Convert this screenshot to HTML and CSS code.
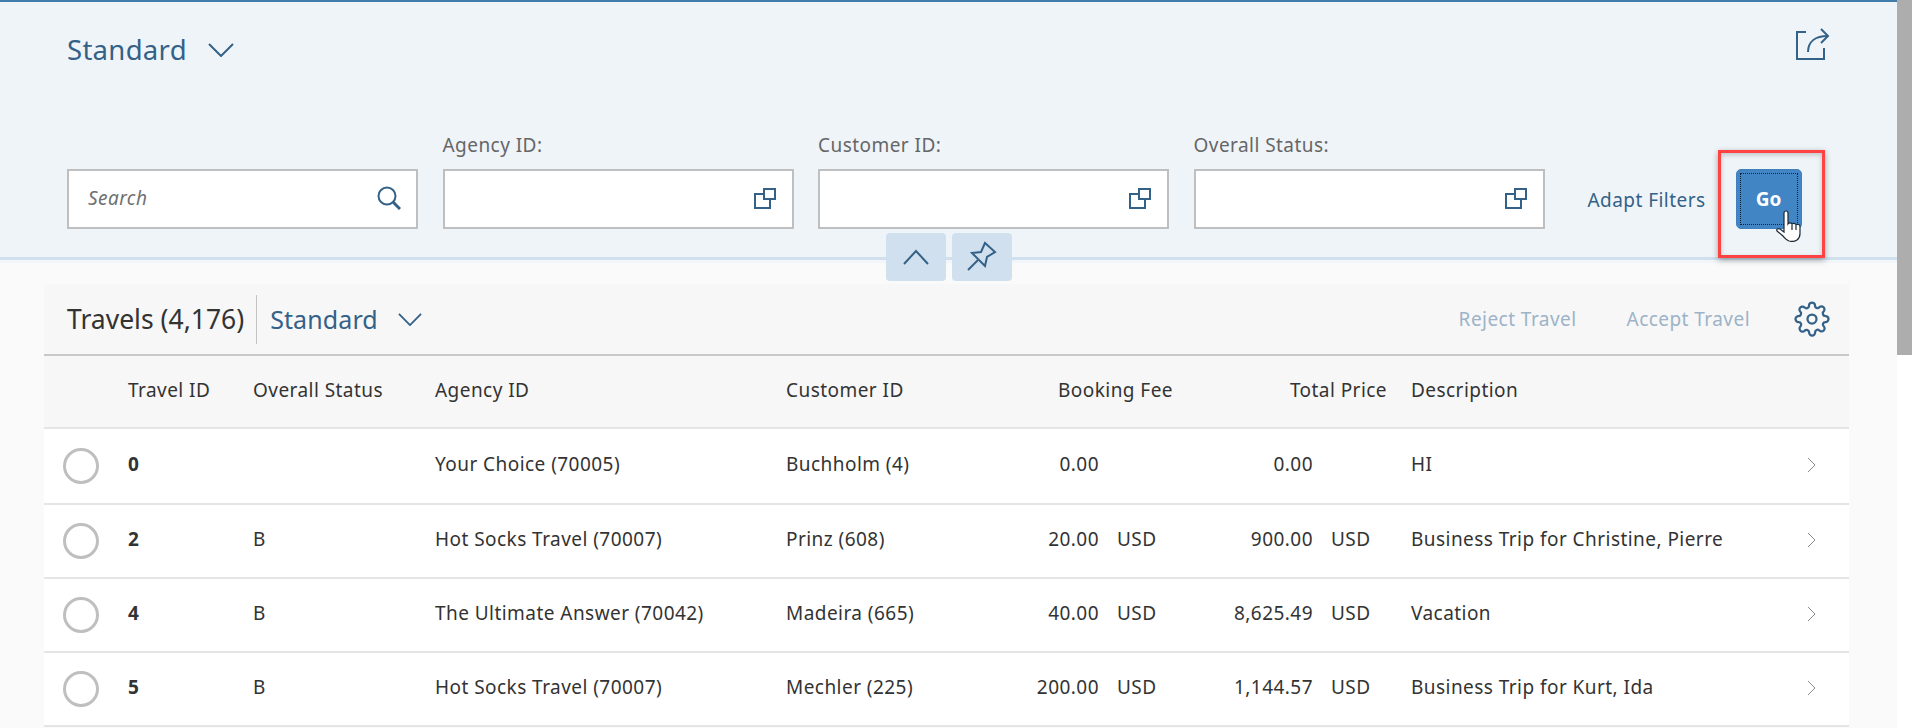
FILE: index.html
```html
<!DOCTYPE html>
<html lang="en">
<head>
    <meta charset="UTF-8">
    <title>Travels</title>
    <link rel="stylesheet" href="styles.css">
</head>
<body>
    <div class="page">
        <div class="filter-bar">
            <div class="title-row">
                <div class="variant">
                    <span class="variant-name">Standard</span>
                    <svg class="chevron-big" viewBox="0 0 26 14"><path d="M1 1l12 12L25 1"/></svg>
                </div>
                <svg class="share-icon" viewBox="0 0 36 34"><path d="M11 4H2v27h27V20"/><path d="M13 24C13 14 20 8 33 8"/><path d="M26 1l7 7-7 7"/></svg>
            </div>
            <div class="filter-row">
                <div class="field">
                    <div class="input">
                        <span class="placeholder">Search</span>
                        <svg class="input-icon" viewBox="0 0 24 24"><circle cx="10" cy="10" r="8.5"/><path d="M16 16l7 7" class="thick"/></svg>
                    </div>
                </div>
                <div class="field">
                    <label>Agency ID:</label>
                    <div class="input">
                        <svg class="input-icon" viewBox="0 0 24 24"><path d="M11 8H2v14h15v-9"/><rect x="11" y="3" width="11" height="10"/></svg>
                    </div>
                </div>
                <div class="field">
                    <label>Customer ID:</label>
                    <div class="input">
                        <svg class="input-icon" viewBox="0 0 24 24"><path d="M11 8H2v14h15v-9"/><rect x="11" y="3" width="11" height="10"/></svg>
                    </div>
                </div>
                <div class="field">
                    <label>Overall Status:</label>
                    <div class="input">
                        <svg class="input-icon" viewBox="0 0 24 24"><path d="M11 8H2v14h15v-9"/><rect x="11" y="3" width="11" height="10"/></svg>
                    </div>
                </div>
                <a class="adapt-link">Adapt Filters</a>
                <button class="go-btn" type="button"><span class="go-focus">Go</span></button>
            </div>
        </div>

        <div class="collapse-btns">
            <div class="collapse-btn">
                <svg class="collapse-arrow" viewBox="0 0 26 16"><path d="M1 15L13 2l12 13"/></svg>
            </div>
            <div class="collapse-btn">
                <svg class="pin-icon" viewBox="0 0 34 34"><path d="M3 30l10-10"/><path d="M7 13l9-1 4-9 10 9-8 5-2 9z"/></svg>
            </div>
        </div>

        <div class="table-wrap">
            <div class="toolbar">
                <span class="table-title">Travels (4,176)</span>
                <span class="toolbar-sep"></span>
                <span class="toolbar-variant">Standard</span>
                <svg class="chevron-mid" viewBox="0 0 26 14"><path d="M1 1l12 12L25 1"/></svg>
                <span class="toolbar-space"></span>
                <span class="action-off">Reject Travel</span>
                <span class="action-off">Accept Travel</span>
                <svg class="gear-icon" viewBox="0 0 24 24"><circle cx="12" cy="12" r="3"/><path d="M19.4 15a1.65 1.65 0 0 0 .33 1.82l.06.06a2 2 0 0 1 0 2.83 2 2 0 0 1-2.83 0l-.06-.06a1.65 1.65 0 0 0-1.82-.33 1.65 1.65 0 0 0-1 1.51V21a2 2 0 0 1-2 2 2 2 0 0 1-2-2v-.09A1.65 1.65 0 0 0 9 19.4a1.65 1.65 0 0 0-1.82.33l-.06.06a2 2 0 0 1-2.83 0 2 2 0 0 1 0-2.83l.06-.06a1.65 1.65 0 0 0 .33-1.82 1.65 1.65 0 0 0-1.51-1H3a2 2 0 0 1-2-2 2 2 0 0 1 2-2h.09A1.65 1.65 0 0 0 4.6 9a1.65 1.65 0 0 0-.33-1.82l-.06-.06a2 2 0 0 1 0-2.83 2 2 0 0 1 2.83 0l.06.06a1.65 1.65 0 0 0 1.82.33H9a1.65 1.65 0 0 0 1-1.51V3a2 2 0 0 1 2-2 2 2 0 0 1 2 2v.09a1.65 1.65 0 0 0 1 1.51 1.65 1.65 0 0 0 1.82-.33l.06-.06a2 2 0 0 1 2.83 0 2 2 0 0 1 0 2.83l-.06.06a1.65 1.65 0 0 0-.33 1.82V9a1.65 1.65 0 0 0 1.51 1H21a2 2 0 0 1 2 2 2 2 0 0 1-2 2h-.09a1.65 1.65 0 0 0-1.51 1z"/></svg>
            </div>
            <table class="travel-table">
                <colgroup>
                    <col class="c-select"><col class="c-id"><col class="c-status"><col class="c-agency">
                    <col class="c-customer"><col class="c-fee"><col class="c-price"><col class="c-desc"><col class="c-nav">
                </colgroup>
                <thead>
                    <tr>
                        <th></th>
                        <th>Travel ID</th>
                        <th>Overall Status</th>
                        <th>Agency ID</th>
                        <th>Customer ID</th>
                        <th class="num">Booking Fee</th>
                        <th class="num">Total Price</th>
                        <th>Description</th>
                        <th></th>
                    </tr>
                </thead>
                <tbody>
                    <tr class="first">
                        <td><span class="radio"></span></td>
                        <td class="strong">0</td>
                        <td></td>
                        <td>Your Choice (70005)</td>
                        <td>Buchholm (4)</td>
                        <td class="num"><span class="amount">0.00</span><span class="unit"></span></td>
                        <td class="num"><span class="amount">0.00</span><span class="unit"></span></td>
                        <td>HI</td>
                        <td class="nav"><svg class="row-chevron" viewBox="0 0 9 16"><path d="M1 1l7 7-7 7"/></svg></td>
                    </tr>
                    <tr>
                        <td><span class="radio"></span></td>
                        <td class="strong">2</td>
                        <td>B</td>
                        <td>Hot Socks Travel (70007)</td>
                        <td>Prinz (608)</td>
                        <td class="num"><span class="amount">20.00</span><span class="unit">USD</span></td>
                        <td class="num"><span class="amount">900.00</span><span class="unit">USD</span></td>
                        <td>Business Trip for Christine, Pierre</td>
                        <td class="nav"><svg class="row-chevron" viewBox="0 0 9 16"><path d="M1 1l7 7-7 7"/></svg></td>
                    </tr>
                    <tr>
                        <td><span class="radio"></span></td>
                        <td class="strong">4</td>
                        <td>B</td>
                        <td>The Ultimate Answer (70042)</td>
                        <td>Madeira (665)</td>
                        <td class="num"><span class="amount">40.00</span><span class="unit">USD</span></td>
                        <td class="num"><span class="amount">8,625.49</span><span class="unit">USD</span></td>
                        <td>Vacation</td>
                        <td class="nav"><svg class="row-chevron" viewBox="0 0 9 16"><path d="M1 1l7 7-7 7"/></svg></td>
                    </tr>
                    <tr>
                        <td><span class="radio"></span></td>
                        <td class="strong">5</td>
                        <td>B</td>
                        <td>Hot Socks Travel (70007)</td>
                        <td>Mechler (225)</td>
                        <td class="num"><span class="amount">200.00</span><span class="unit">USD</span></td>
                        <td class="num"><span class="amount">1,144.57</span><span class="unit">USD</span></td>
                        <td>Business Trip for Kurt, Ida</td>
                        <td class="nav"><svg class="row-chevron" viewBox="0 0 9 16"><path d="M1 1l7 7-7 7"/></svg></td>
                    </tr>
                </tbody>
            </table>
        </div>

        <!-- annotation drawn on top of the screenshot -->
        <div class="highlight-box"></div>
        <svg class="hand-cursor" viewBox="0 0 26 32"><path d="M8 3a2 2 0 0 1 4 0v11c1-1.500 3-1.500 4 0 1-1 3-1 4 .5 1.500-.5 4 0 4 2v7c0 3-1 5-3 6.500-2 1.500-6 1.500-8 1-3-1-4-3-6-5l-6-5c-1-1.500 1-3 3-2l4 3z"/><path d="M16 14.500V20M20 15v5"/></svg>
    </div>
    <div class="scrollbar"><div class="scroll-thumb"></div></div>
</body>
</html>
```

FILE: styles.css
```css
html, body {
    margin: 0;
    height: 728px;
    overflow: hidden;
}
body {
    display: flex;
    font-family: "Noto Sans", "Open Sans", Arial, sans-serif;
    font-size: 19px;
    letter-spacing: 0.45px;
    color: #333;
    background: #fafafa;
}
svg {
    fill: none;
    stroke: #346187;
    stroke-width: 2;
}

.page {
    position: relative;
    flex: 1;
    min-width: 0;
}

.scrollbar {
    width: 15px;
    background: #fff;
}
.scroll-thumb {
    height: 355px;
    background: #adadad;
}

/* filter bar */
.filter-bar {
    height: 255px;
    padding: 0 67px;
    background: #eff4f9;
    border-top: 2px solid #427cac;
    border-bottom: 3px solid #d1e0ee;
    box-shadow: 0 3px 0 #f2f6fa;
}
.title-row {
    display: flex;
    justify-content: space-between;
    align-items: flex-start;
    height: 131px;
}
.variant {
    display: flex;
    align-items: center;
    gap: 21px;
    padding-top: 30px;
}
.variant-name {
    font-size: 27.5px;
    letter-spacing: 0.3px;
    line-height: 36px;
    color: #346187;
}
.chevron-big {
    width: 26px;
    height: 14px;
}
.share-icon {
    width: 36px;
    height: 34px;
    margin-top: 26px;
    margin-right: -1px;
}

.filter-row {
    display: flex;
    align-items: flex-end;
    gap: 24px;
}
.field {
    flex: none;
    width: 351px;
}
.field + .field {
    margin-left: 0.5px;
}
.field label {
    display: block;
    line-height: 24px;
    margin-bottom: 12px;
    color: #666;
}
.input {
    display: flex;
    align-items: center;
    justify-content: space-between;
    box-sizing: border-box;
    height: 60px;
    padding: 0 15px 2px 19px;
    background: #fff;
    border: 2px solid #bfbfbf;
}
.input .input-icon {
    margin-left: auto;
}
.placeholder {
    font-style: italic;
    color: #707070;
}
.input-icon {
    width: 24px;
    height: 24px;
}
.thick {
    stroke-width: 3;
}
.adapt-link {
    flex: none;
    width: 123px;
    margin-left: 19px;
    line-height: 58px;
    color: #346187;
    white-space: nowrap;
}
.go-btn {
    flex: none;
    box-sizing: border-box;
    width: 66px;
    height: 60px;
    margin-left: 1px;
    padding: 3px;
    font: inherit;
    font-weight: 700;
    color: #fff;
    background: #4285c4;
    border: 1px solid #3f80bd;
    border-radius: 5px;
}
.go-focus {
    display: flex;
    align-items: center;
    justify-content: center;
    height: 100%;
    box-sizing: border-box;
    border: 1px dotted #10202e;
}

/* collapse and pin buttons sit on the header edge */
.collapse-btns {
    position: absolute;
    top: 233px;
    left: 50%;
    display: flex;
    gap: 6px;
    transform: translateX(-50%);
}
.collapse-btn {
    display: flex;
    align-items: center;
    justify-content: center;
    width: 60px;
    height: 48px;
    background: #d1e0ee;
    border-radius: 4px;
}
.collapse-arrow {
    width: 26px;
    height: 16px;
}
.pin-icon {
    width: 34px;
    height: 34px;
}

/* table */
.table-wrap {
    margin: 24px 48px 0 44px;
}
.toolbar {
    display: flex;
    align-items: center;
    box-sizing: border-box;
    height: 72px;
    padding: 0 19px 0 23px;
    background: #f7f7f7;
    border-bottom: 2px solid #c8c8c8;
}
.table-title {
    font-size: 26.5px;
    letter-spacing: 0;
    color: #333;
}
.toolbar-sep {
    width: 1px;
    height: 49px;
    margin: 0 13px 0 12px;
    background: #c4c4c4;
}
.toolbar-variant {
    font-size: 25px;
    letter-spacing: 0.1px;
    color: #346187;
}
.chevron-mid {
    width: 24px;
    height: 13px;
    margin-left: 20px;
}
.toolbar-space {
    flex: 1;
}
.action-off {
    margin-right: 50px;
    color: #9cb3c8;
}
.action-off + .action-off {
    margin-right: 44px;
}
.gear-icon {
    width: 36px;
    height: 36px;
    stroke-width: 1.500;
}

.travel-table {
    width: 100%;
    table-layout: fixed;
    border-collapse: collapse;
}
.c-select { width: 72px; }
.c-id { width: 125px; }
.c-status { width: 182px; }
.c-agency { width: 351px; }
.c-customer { width: 226px; }
.c-fee { width: 185px; }
.c-price { width: 214px; }
.c-desc { width: 381px; }
.travel-table th,
.travel-table td {
    padding: 0 12px;
    text-align: left;
    white-space: nowrap;
    vertical-align: middle;
}
.travel-table th {
    height: 72px;
    padding-bottom: 3px;
    box-sizing: border-box;
    font-weight: 400;
    background: #f7f7f7;
    border-bottom: 2px solid #e5e5e5;
}
.travel-table td {
    height: 74px;
    padding-bottom: 4px;
    box-sizing: border-box;
    background: #fff;
    border-bottom: 2px solid #e5e5e5;
}
.travel-table .first td {
    height: 76px;
}
.travel-table th.num,
.travel-table td.num {
    text-align: right;
}
.strong {
    font-weight: 700;
}
.amount {
    display: inline-block;
}
.unit {
    display: inline-block;
    width: 56px;
    margin-left: 18px;
    text-align: left;
}
.radio {
    display: block;
    box-sizing: border-box;
    width: 36px;
    height: 36px;
    margin: 4px 0 0 7px;
    background: #fff;
    border: 3px solid #bfbfbf;
    border-radius: 50%;
}
.travel-table td.nav {
    text-align: right;
}
.row-chevron {
    width: 9px;
    height: 16px;
    margin: 8px 21px 0 0;
    stroke: #8c8c8c;
    stroke-width: 1;
}

.highlight-box {
    position: absolute;
    top: 150px;
    left: 1718px;
    box-sizing: border-box;
    width: 107px;
    height: 108px;
    border: 3px solid #ff4343;
    box-shadow: 0 2px 6px rgba(0, 0, 0, 0.35), inset 0 2px 5px rgba(0, 0, 0, 0.2);
}
.hand-cursor {
    position: absolute;
    top: 210px;
    left: 1776px;
    width: 26px;
    height: 32px;
    fill: #fff;
    stroke: #1b2a38;
    stroke-width: 1.200;
}
```
